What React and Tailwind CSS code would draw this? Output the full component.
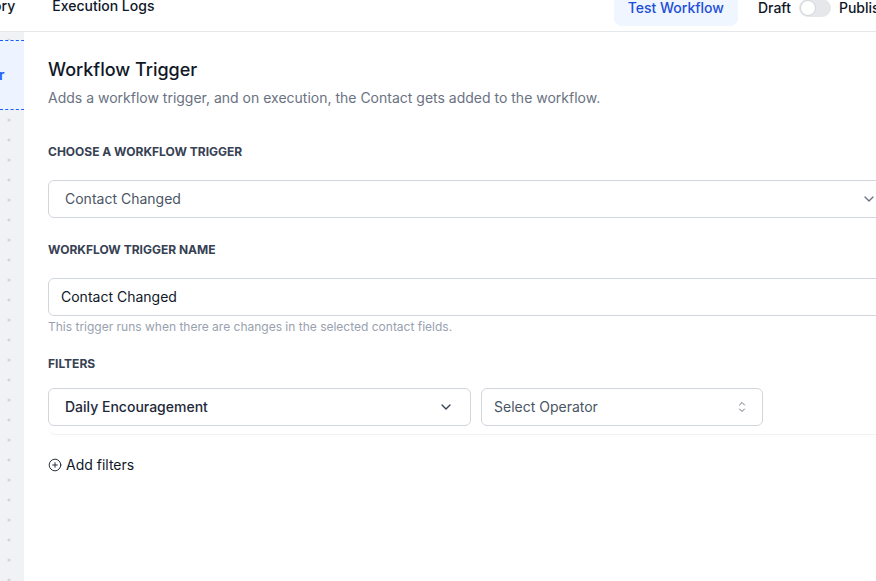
import React from "react";
import { ChevronDown, CirclePlus } from "lucide-react";

function UpDown() {
  return (
    <svg viewBox="0 0 24 24" fill="none" stroke="currentColor" strokeWidth="1.5" className="size-4 text-gray-500">
      <path strokeLinecap="round" strokeLinejoin="round" d="M8.25 15 12 18.75 15.75 15m-7.5-6L12 5.25 15.75 9" />
    </svg>
  );
}

function Header() {
  return (
    <div className="h-[32px] border-b border-gray-200 flex items-start text-sm font-medium text-gray-900">
      <div className="flex gap-[37px] -ml-[33px] mt-[-4px] leading-5">
        <span>History</span>
        <span>Execution Logs</span>
      </div>
      <div className="ml-auto flex items-start mr-[-12px]">
        <button className="h-[36px] mt-[-10px] px-[14px] rounded-lg bg-blue-50 text-[#1d4ed8] leading-5">
          Test Workflow
        </button>
        <span className="ml-5 mt-[-2px] leading-5">Draft</span>
        <span className="ml-2 mt-[-1px] w-[32px] h-[18px] rounded-full bg-gray-200 flex items-center px-[1px]">
          <span className="size-4 rounded-full bg-white border border-gray-300"></span>
        </span>
        <span className="ml-2 mt-[-2px] leading-5">Publish</span>
      </div>
    </div>
  );
}

function Canvas() {
  return (
    <div className="relative w-[24px] shrink-0 bg-[#f1f2f6] overflow-hidden">
      <svg className="w-full h-full" width="24" height="560">
        <defs>
          <pattern id="dots" width="20" height="20" patternUnits="userSpaceOnUse" x="-1" y="-2">
            <circle cx="10" cy="10" r="1.6" fill="#d3d5dc" />
          </pattern>
        </defs>
        <rect width="24" height="560" fill="url(#dots)" />
      </svg>
      <div className="absolute left-0 top-[8px] w-[40px] h-[70px] bg-[#edf3ff] border-y border-dashed border-blue-600 flex items-center">
        <span className="text-sm font-semibold text-blue-600 -ml-[1px]">r</span>
      </div>
    </div>
  );
}

export default function App() {
  return (
    <div className="w-[876px] h-[581px] overflow-hidden bg-white flex flex-col" style={{ fontFamily: "Inter, 'Noto Sans', sans-serif" }}>
      <Header />
      <div className="flex flex-1 min-h-0">
        <Canvas />
        <div className="flex-1 pl-6 pt-6 overflow-hidden">
          <div className="w-[846px]">
            <h2 className="text-lg font-medium text-gray-900 leading-7">Workflow Trigger</h2>
            <p className="mt-1 text-sm text-gray-500 leading-5">
              Adds a workflow trigger, and on execution, the Contact gets added to the workflow.
            </p>

            <div className="mt-9 text-xs font-bold uppercase text-gray-700 leading-4">
              Choose a workflow trigger
            </div>
            <div className="mt-5 h-[38px] rounded-md border border-gray-300 flex items-center px-4 text-sm text-gray-600">
              <span className="flex-1">Contact Changed</span>
              <ChevronDown className="size-4 text-gray-500" strokeWidth={2} />
            </div>

            <div className="mt-6 text-xs font-bold uppercase text-gray-700 leading-4">
              Workflow trigger name
            </div>
            <div className="mt-5 h-[38px] rounded-md border border-gray-300 flex items-center px-3 text-sm text-gray-900">
              Contact Changed
            </div>
            <p className="mt-[3px] text-xs text-gray-400 leading-4">
              This trigger runs when there are changes in the selected contact fields.
            </p>

            <div className="mt-[21px] text-xs font-bold uppercase text-gray-700 leading-4">
              Filters
            </div>
            <div className="mt-4 pb-2 rounded-lg border-b border-[#f0f1f3]">
              <div className="flex gap-[10px]">
                <div className="w-[423px] h-[38px] rounded-md border border-gray-300 flex items-center pl-4 pr-4 text-sm font-medium text-gray-800">
                  <span className="flex-1">Daily Encouragement</span>
                  <ChevronDown className="size-4 text-gray-700" strokeWidth={2} />
                </div>
                <div className="w-[282px] h-[38px] rounded-md border border-gray-300 flex items-center pl-3 pr-3 text-sm text-gray-600">
                  <span className="flex-1">Select Operator</span>
                  <UpDown />
                </div>
              </div>
            </div>

            <button className="mt-5 flex items-center gap-1 text-sm text-gray-900 leading-5">
              <CirclePlus className="size-[14px]" strokeWidth={1.5} />
              Add filters
            </button>
          </div>
        </div>
      </div>
    </div>
  );
}
